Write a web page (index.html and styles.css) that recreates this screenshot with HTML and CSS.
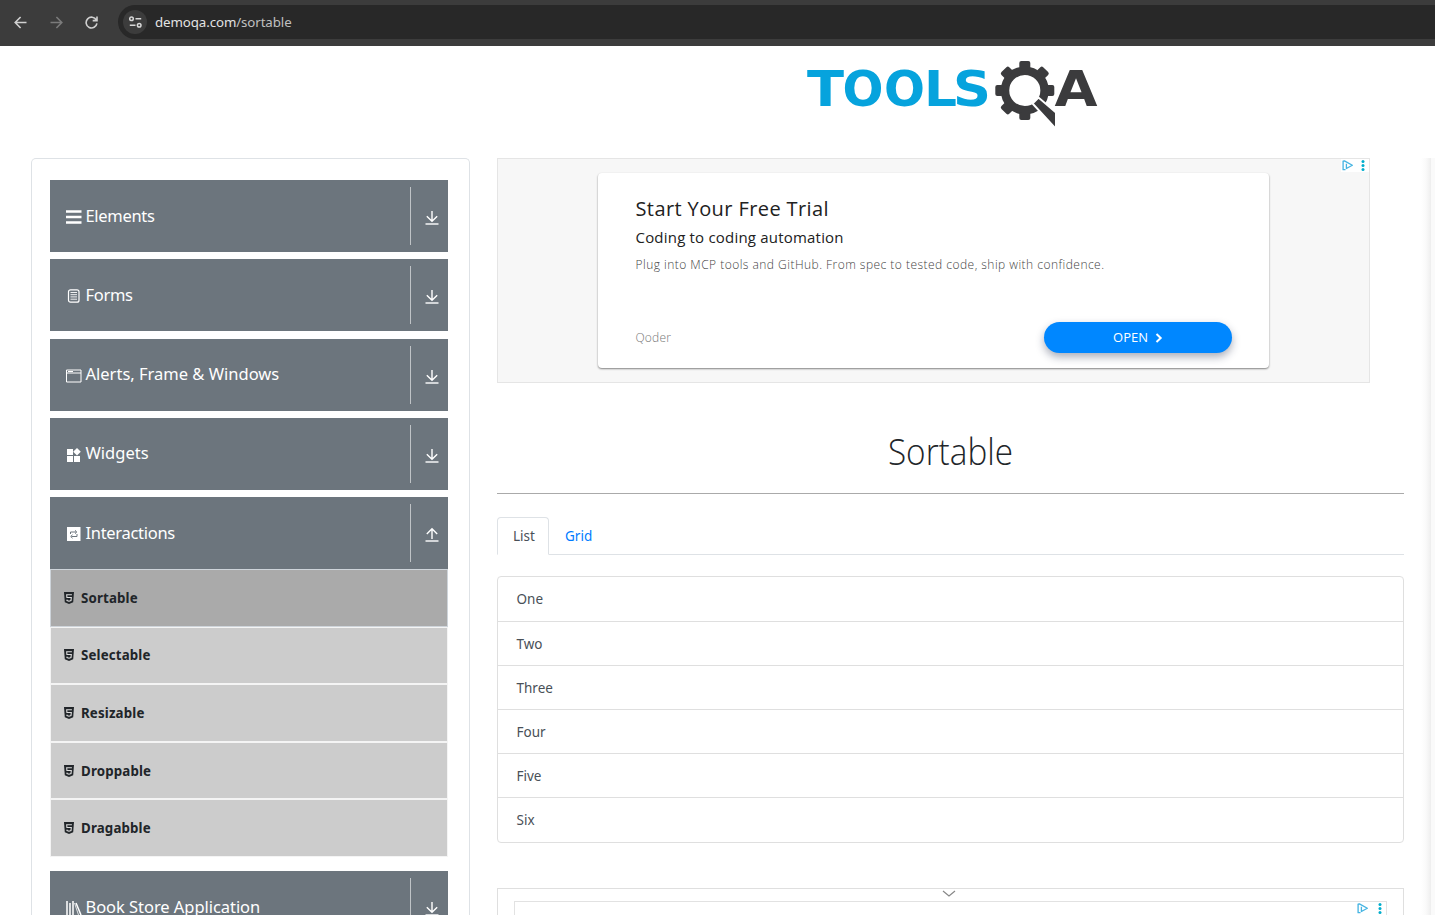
FILE: index.html
```html
<!DOCTYPE html>
<html lang="en">
<head>
<meta charset="utf-8">
<title>demoqa.com/sortable</title>
<link rel="stylesheet" href="styles.css">
</head>
<body>
<svg class="defs" width="0" height="0">
  <symbol id="down" viewBox="0 0 14 15"><path d="M7 1v10M1.8 6.2 7 11.2l5.200-5" fill="none" stroke="currentColor" stroke-width="1.400"/><path d="M.5 14h13" stroke="currentColor" stroke-width="1.400"/></symbol>
  <symbol id="up" viewBox="0 0 14 15"><path d="M7 12V2M1.800 7 7 1.800 12.200 7" fill="none" stroke="currentColor" stroke-width="1.400"/><path d="M.5 14h13" stroke="currentColor" stroke-width="1.400"/></symbol>
  <symbol id="html5" viewBox="0 0 10 12"><path d="M0 0h10l-.8 10.300L5 12 .8 10.300z" fill="currentColor"/><path d="M7.900 2.700H2.700l.2 2.800h4.400L7 8.600l-2 .6-2-.6-.1-1" fill="none" stroke="#ddd" stroke-width="1.100"/></symbol>
  <symbol id="adchoice" viewBox="0 0 10 10"><path d="M3.200 8.800H1V1l1.200-.2L9.400 4.800 4 7.700V3.300" fill="none" stroke="#45b4e2" stroke-width="1.200" stroke-linejoin="round"/></symbol>
  <symbol id="dots" viewBox="0 0 4 11"><circle cx="2" cy="1.600" r="1.500" fill="#00aecd"/><circle cx="2" cy="5.500" r="1.500" fill="#00aecd"/><circle cx="2" cy="9.400" r="1.500" fill="#00aecd"/></symbol>
</svg>

<header class="browser">
  <svg class="nav" width="13" height="13" viewBox="0 0 13 13"><path d="M12.500 6.500H1.300M6.600 1 1.200 6.500l5.400 5.500"/></svg>
  <svg class="nav dim" width="13" height="13" viewBox="0 0 13 13"><path d="M.5 6.500h11.200M6.400 1l5.400 5.500L6.400 12"/></svg>
  <svg class="nav" width="13" height="13" viewBox="0 0 13 13"><path d="M11.300 4A5.400 5.400 0 1 0 11.900 7.300M12 .6v4H7.700"/></svg>
  <div class="address">
    <span class="tune"><svg width="13" height="12" viewBox="0 0 13 12"><circle cx="2.500" cy="2.800" r="1.800"/><path d="M6.500 2.800h5.700M.8 9.200h5.700"/><circle cx="10.200" cy="9.200" r="1.800"/></svg></span>
    <span class="url">demoqa.com<i>/sortable</i></span>
  </div>
</header>

<div class="brand">
  <svg width="292" height="68" viewBox="806 60 292 68">
    <g class="tools">
      <text x="807" y="106" textLength="37" lengthAdjust="spacingAndGlyphs">T</text>
      <text x="842.500" y="106" textLength="41" lengthAdjust="spacingAndGlyphs">O</text>
      <text x="884" y="106" textLength="41" lengthAdjust="spacingAndGlyphs">O</text>
      <text x="924" y="106" textLength="33" lengthAdjust="spacingAndGlyphs">L</text>
      <text x="953" y="106" textLength="38" lengthAdjust="spacingAndGlyphs">S</text>
    </g>
    <circle cx="1024.800" cy="90.500" r="19.800" fill="none" stroke="#3b3b3d" stroke-width="8.500"/>
    <g fill="#3b3b3d" transform="translate(1024.800 90.500)">
      <rect id="tooth" x="-5.500" y="-29.500" width="11" height="8" rx="2"/>
      <use href="#tooth" transform="rotate(45)"/>
      <use href="#tooth" transform="rotate(90)"/>
      <use href="#tooth" transform="rotate(180)"/>
      <use href="#tooth" transform="rotate(225)"/>
      <use href="#tooth" transform="rotate(270)"/>
      <use href="#tooth" transform="rotate(315)"/>
    </g>
    <path fill="#3b3b3d" stroke="#fff" stroke-width="2" d="M1032.500 103.500 1038.500 97.500 1056 112.500V129z"/>
    <text class="qa" x="1054.500" y="106" textLength="43" lengthAdjust="spacingAndGlyphs">A</text>
  </svg>
</div>

<main class="columns">
  <nav class="sidebar">
    <div class="group"><svg width="16" height="14" viewBox="0 0 16 14"><path d="M0 1.500h15.500M0 7h15.500M0 12.500h15.500" stroke="#fff" stroke-width="2.300"/></svg><span class="tight">Elements</span><b class="arrow"><svg><use href="#down"/></svg></b></div>
    <div class="group"><svg width="16" height="14" viewBox="0 0 16 14"><rect x="2.500" y=".8" width="10.500" height="12.400" rx="2" fill="none" stroke="#fff" stroke-width="1.200"/><path d="M4.500 3.500h6.500M4.500 5.700h6.500M4.500 7.900h6.500M4.500 10.200h6.500" stroke="#fff" stroke-width=".9"/></svg><span class="tight">Forms</span><b class="arrow"><svg><use href="#down"/></svg></b></div>
    <div class="group"><svg width="16" height="14" viewBox="0 0 16 14"><path d="M.5 1h14.500v12H.5zM.5 4H15M2 2.500h5" fill="none" stroke="#fff"/></svg><span>Alerts, Frame &amp; Windows</span><b class="arrow"><svg><use href="#down"/></svg></b></div>
    <div class="group"><svg width="16" height="14" viewBox="0 0 16 14"><path d="M1 1h6v6H1zM1 8h6v6H1zM8 8h6v6H8zM11 0l3.800 3.800L11 7.500 7.200 3.800z" fill="#fff"/></svg><span>Widgets</span><b class="arrow"><svg><use href="#down"/></svg></b></div>
    <div class="group open"><svg width="16" height="14" viewBox="0 0 16 14"><path d="M1 0h13.500v14H1z" fill="#fff"/><path d="M4.500 7V5h5.500M9 3.300l1.800 1.700L9 6.700M11 7v2.500H5.500M6.500 7.800 4.700 9.500l1.800 1.700" fill="none" stroke="#6c757d"/></svg><span class="tight">Interactions</span><b class="arrow"><svg><use href="#up"/></svg></b></div>
    <ul class="menu">
      <li class="active"><svg><use href="#html5"/></svg>Sortable</li>
      <li><svg><use href="#html5"/></svg>Selectable</li>
      <li><svg><use href="#html5"/></svg>Resizable</li>
      <li><svg><use href="#html5"/></svg>Droppable</li>
      <li><svg><use href="#html5"/></svg>Dragabble</li>
    </ul>
    <div class="group last"><svg width="16" height="14" viewBox="0 0 16 14"><path d="M1 0v14M4 2v12M7 0v14M10 2l5 12" stroke="#fff" stroke-width="1.500"/><path d="M8.500 2l4 12" stroke="#fff" stroke-width=".8"/></svg><span>Book Store Application</span><b class="arrow"><svg><use href="#down"/></svg></b></div>
  </nav>

  <section class="content">
    <div class="ad">
      <div class="choices"><svg class="ac"><use href="#adchoice"/></svg><svg class="dt"><use href="#dots"/></svg></div>
      <div class="card">
        <h2>Start Your Free Trial</h2>
        <h3>Coding to coding automation</h3>
        <p>Plug into MCP tools and GitHub. From spec to tested code, ship with confidence.</p>
        <div class="foot"><span>Qoder</span><a class="cta">OPEN<svg width="8" height="10" viewBox="0 0 8 10"><path d="M1.500 1 5.700 5 1.500 9" fill="none" stroke="#fff" stroke-width="2"/></svg></a></div>
      </div>
    </div>
    <h1><span>Sortable</span></h1>
    <div class="tabs"><a class="tab on">List</a><a class="tab">Grid</a></div>
    <ul class="list"><li>One</li><li>Two</li><li>Three</li><li>Four</li><li>Five</li><li>Six</li></ul>
    <div class="anchor">
      <svg class="chev" width="14" height="8" viewBox="0 0 14 8"><path d="M1 1l6 5 6-5" fill="none" stroke="#888" stroke-width="1.200"/></svg>
      <div class="inner"><svg class="ac"><use href="#adchoice"/></svg><svg class="dt"><use href="#dots"/></svg></div>
    </div>
  </section>
  <aside class="edge"></aside>
</main>
</body>
</html>
```
FILE: styles.css
```css
* { box-sizing: border-box; }
body { margin: 0; height: 915px; overflow: hidden; background: #fff; color: #212529; font-family: "Noto Sans", "Open Sans", sans-serif; display: flex; flex-direction: column; }
ul, h1, h2, h3, p { margin: 0; padding: 0; list-style: none; }
.defs { position: absolute; }
.browser { flex: none; height: 46px; background: #3c3c3c; display: flex; align-items: center; padding: 0 0 2px 14px; }
.nav { flex: none; margin-right: 22.500px; fill: none; stroke: #d0d0d0; stroke-width: 1.600; }
.nav.dim { stroke: #7b7b7b; }
.address { flex: 1; height: 34px; margin-left: -2.500px; background: #282828; border-radius: 17px 0 0 17px; display: flex; align-items: center; padding-left: 5px; }
.tune { width: 24px; height: 24px; border-radius: 50%; background: #3c3c3c; display: flex; align-items: center; justify-content: center; fill: none; stroke: #d8d8d8; stroke-width: 1.500; }
.url { margin-left: 8px; font-size: 13.300px; color: #e3e3e3; letter-spacing: -.1px; }
.url i { font-style: normal; color: #c0c0c0; }
.brand { flex: none; height: 112px; padding: 14px 0 0 806px; }
.brand svg { display: block; }
.tools, .qa { font-family: "DejaVu Sans", sans-serif; font-weight: 700; font-size: 50px; fill: #06a3dd; }
.qa { fill: #3b3b3d; }
.columns { flex: 1; min-height: 0; display: flex; padding-left: 31px; overflow: hidden; }
.sidebar { width: 439px; height: 770px; flex: none; border: 1px solid #dee2e6; border-bottom: 0; border-radius: 5px 5px 0 0; padding: 21px 21px 0 18px; }
.group { height: 72px; margin-bottom: 7.250px; background: #6c757d; color: #fff; display: flex; align-items: center; padding-left: 16px; font-size: 16.500px; }
.group > svg { flex: none; margin: 2px 3.500px 0 0; }
.group > span { white-space: nowrap; margin-top: -2px; }
.group > .tight { letter-spacing: -.3px; }
.group.last { margin-bottom: 0; }
.group.last > span { margin-top: 0; letter-spacing: -.05px; }
.group.open { margin-bottom: 0; }
.arrow { margin-left: auto; width: 38px; height: 58px; border-left: 1px solid #bfc3c6; display: flex; align-items: center; justify-content: center; padding: 3px 0 0 5px; }
.arrow svg { width: 14px; height: 15px; }
.menu { margin-bottom: 14px; }
.menu li { height: 57.600px; border: 1px solid #f4f4f4; background: #ccc; display: flex; align-items: center; padding-left: 13px; font-size: 13.300px; font-weight: 700; letter-spacing: .15px; }
.menu li.active { background: #aaa; border-color: #ced4da; }
.menu svg { width: 10px; height: 12px; margin-right: 7px; }
.content { width: 907px; margin-left: 27px; flex: none; }
.ad { width: 873px; height: 225px; border: 1px solid #e5e5e5; background: #f7f7f7; padding: 14px 100px; position: relative; }
.choices { position: absolute; top: 0; right: 0; width: 28px; height: 13px; background: #fff; display: flex; padding: 1px 0 0 1px; }
.ac { width: 11px; height: 11px; }
.dt { width: 4px; height: 11px; margin-left: 8px; }
.card { height: 195px; border-radius: 4px; background: #fff; box-shadow: 0 1px 2px rgba(0,0,0,.48); padding: 22px 37px 0 37.500px; font-family: "Open Sans", sans-serif; color: #212121; }
.card h2 { font-size: 20px; line-height: 28px; font-weight: 400; letter-spacing: .4px; }
.card h3 { font-size: 15px; line-height: 29px; font-weight: 400; letter-spacing: .2px; }
.card p { font-size: 12px; line-height: 26px; color: #444; font-weight: 300; letter-spacing: .47px; }
.foot { margin-top: 44px; display: flex; align-items: center; justify-content: space-between; font-size: 12px; font-weight: 300; color: #777; letter-spacing: .2px; }
.cta { width: 188px; height: 31px; border-radius: 16px; background: #0087ff; color: #fff; font-size: 13px; font-weight: 400; letter-spacing: 0; display: flex; align-items: center; justify-content: center; box-shadow: 0 4px 9px rgba(30,40,70,.38); padding-bottom: 1px; }
.cta svg { margin: 2px 0 0 7px; }
h1 { height: 111px; border-bottom: 1px solid #aaa; font: 300 37px/54px "Open Sans", sans-serif; padding-top: 41px; text-align: center; }
h1 span { display: inline-block; transform: scaleX(.9); }
.tabs { height: 38px; margin-top: 23px; border-bottom: 1px solid #dee2e6; display: flex; font-size: 13.500px; }
.tab { height: 38px; padding: 0 16px; line-height: 39px; color: #007bff; }
.tab.on { width: 52px; padding: 0 15px; line-height: 37px; color: #495057; background: #fff; border: 1px solid #dee2e6; border-bottom-color: #fff; border-radius: 4px 4px 0 0; }
.list { margin-top: 21px; border: 1px solid #dfdfdf; border-radius: 4px; font-size: 13.500px; color: #495057; }
.list li { height: 44.100px; padding-left: 18.500px; line-height: 44px; border-bottom: 1px solid #dfdfdf; }
.list li:first-child { height: 45px; }
.list li:last-child { border-bottom: 0; height: 43.600px; }
.anchor { margin-top: 45px; height: 30px; border: 1px solid #dfdfdf; border-bottom: 0; padding: 1px 16px 0; }
.chev { display: block; margin: 0 auto 3px; position: relative; left: -1.500px; }
.inner { height: 16px; border: 1px solid #e2e2e2; border-bottom: 0; display: flex; justify-content: flex-end; padding: 1px 4px 0 0; }
.inner .dt { margin-left: 10px; }
.edge { width: 14px; flex: none; margin-left: 17px; background: linear-gradient(90deg, #fff 0, #fafafa 5px, #eee 10px, #fafafa 10px); }
```
